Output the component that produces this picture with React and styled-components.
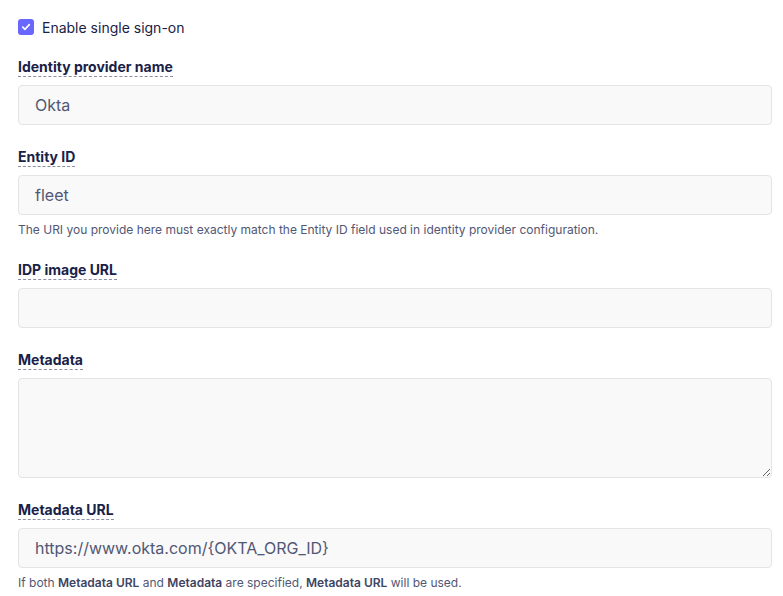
import styled, { createGlobalStyle } from "styled-components";

const GlobalStyle = createGlobalStyle`
  * { box-sizing: border-box; }
  body {
    margin: 0;
    background: #fff;
    font-family: Inter, "Noto Sans", sans-serif;
    color: #192147;
  }
`;

const Form = styled.form`
  width: 754px;
  margin-left: 18px;
  padding-top: 17px;
  display: flex;
  flex-direction: column;
`;

const CheckRow = styled.label`
  display: flex;
  align-items: center;
  gap: 8px;
  height: 20px;
  margin-bottom: 20px;
  font-size: 14px;
  color: #192147;
  cursor: pointer;
`;

const Box = styled.span`
  width: 16px;
  height: 16px;
  border-radius: 3px;
  background: #6a67fe;
  display: flex;
  align-items: center;
  justify-content: center;
`;

const Field = styled.div`
  display: flex;
  flex-direction: column;
  align-items: flex-start;
  margin-bottom: 22px;
`;

const Label = styled.label`
  display: inline-block;
  font-size: 14px;
  font-weight: 700;
  line-height: 19px;
  color: #192147;
  border-bottom: 1px dashed #8b8fa2;
  margin-bottom: 8px;
`;

const inputBase = `
  width: 100%;
  font-family: Inter, "Noto Sans", sans-serif;
  font-size: 16px;
  color: #515774;
  background: #f9f9fa;
  border: 1px solid #e3e4e8;
  border-radius: 4px;
  padding: 0 16px;
  outline: none;
`;

const Input = styled.input`
  ${inputBase}
  height: 40px;
`;

const TextArea = styled.textarea`
  ${inputBase}
  height: 100px;
  padding: 10px 16px;
  resize: vertical;
  display: block;
`;

const Help = styled.p`
  margin: 7px 0 0;
  font-size: 12px;
  line-height: 16px;
  color: #515774;

  b {
    font-weight: 600;
    color: #3e4462;
  }
`;

const TextField = ({ label, value, help, area }) => (
  <Field>
    <Label>{label}</Label>
    {area ? (
      <TextArea defaultValue={value} />
    ) : (
      <Input defaultValue={value} />
    )}
    {help && <Help>{help}</Help>}
  </Field>
);

export default function App() {
  return (
    <>
      <GlobalStyle />
      <Form onSubmit={(e) => e.preventDefault()}>
        <CheckRow>
          <Box>
            <svg width="10" height="10" viewBox="0 0 10 10" fill="none">
              <path
                d="M1.8 5.2 4 7.3 8.3 2.6"
                stroke="#fff"
                strokeWidth="1.7"
                strokeLinecap="round"
                strokeLinejoin="round"
              />
            </svg>
          </Box>
          Enable single sign-on
        </CheckRow>
        <TextField label="Identity provider name" value="Okta" />
        <TextField
          label="Entity ID"
          value="fleet"
          help="The URI you provide here must exactly match the Entity ID field used in identity provider configuration."
        />
        <TextField label="IDP image URL" value="" />
        <TextField label="Metadata" value="" area />
        <TextField
          label="Metadata URL"
          value="https://www.okta.com/{OKTA_ORG_ID}"
          help={
            <>
              If both <b>Metadata URL</b> and <b>Metadata</b> are specified,{" "}
              <b>Metadata URL</b> will be used.
            </>
          }
        />
      </Form>
    </>
  );
}
